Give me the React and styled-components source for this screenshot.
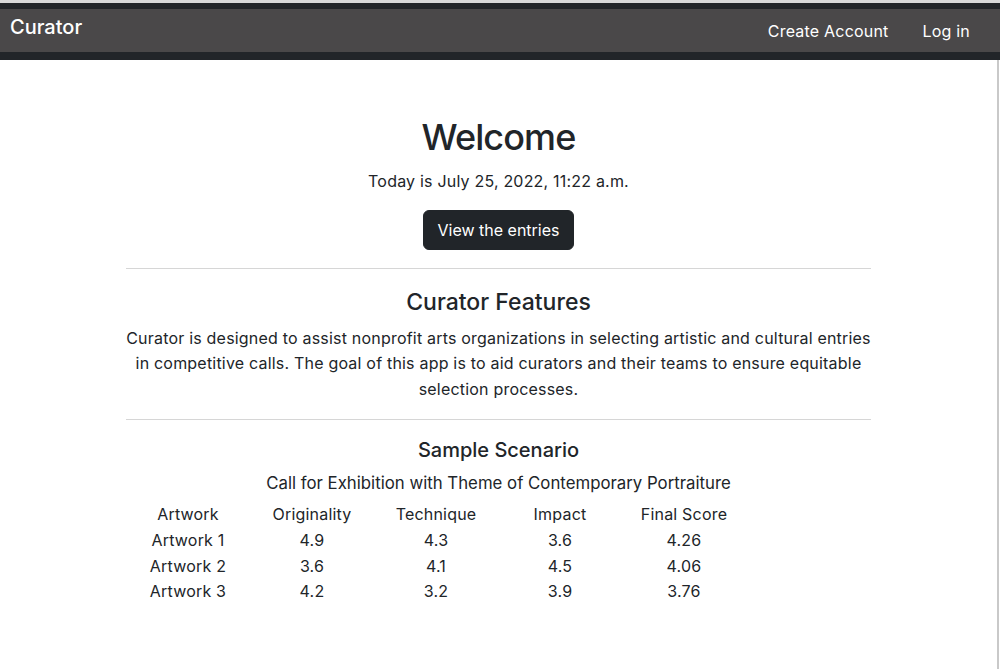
import React from "react";
import styled, { createGlobalStyle } from "styled-components";

const GlobalStyle = createGlobalStyle`
  body {
    margin: 0;
    background: #fff;
    font-family: Inter, "Noto Sans", sans-serif;
    color: #212529;
    font-size: 16px;
  }
`;

const NavBar = styled.nav`
  background: #222529;
  border-top: 3px solid #d9d9d9;
  padding: 6px 0 8px;
`;

const NavInner = styled.div`
  background: #4a4849;
  height: 43px;
  display: flex;
  align-items: center;
  justify-content: space-between;
  padding: 0 30px 0 10px;
`;

const Brand = styled.a`
  color: #fff;
  font-size: 20px;
  font-weight: 500;
  text-decoration: none;
  margin-top: -8px;
`;

const NavLinks = styled.div`
  display: flex;
  gap: 34px;
  margin-top: 1px;
`;

const NavLink = styled.a`
  color: #fff;
  font-size: 16px;
  letter-spacing: 0.2px;
  text-decoration: none;
`;

const Page = styled.div`
  margin-right: 1px;
  border-right: 2px solid #c9c9c9;
  min-height: 609px;
`;

const Main = styled.main`
  width: 745px;
  margin: 0 auto;
  padding-top: 53px;
  text-align: center;
  letter-spacing: 0.2px;
`;

const Title = styled.h1`
  font-size: 36px;
  font-weight: 500;
  letter-spacing: -0.9px;
  margin: 0;
  line-height: 48px;
`;

const DateLine = styled.p`
  margin: 8px 0 0;
  line-height: 24px;
`;

const Button = styled.button`
  margin-top: 17px;
  background: #212529;
  color: #fff;
  border: 1px solid #212529;
  border-radius: 6px;
  font-family: inherit;
  letter-spacing: 0;
  font-size: 16px;
  padding: 0 12px;
  height: 40px;
  width: 151px;
`;

const Rule = styled.hr`
  border: 0;
  border-top: 1px solid #d6d6d6;
  margin: ${(p) => p.$top}px 0 0;
`;

const SectionTitle = styled.h3`
  font-size: ${(p) => p.$size}px;
  font-weight: 500;
  letter-spacing: 0;
  margin: ${(p) => p.$top}px 0 0;
  line-height: 1.2;
`;

const Text = styled.p`
  margin: 9px 0 0;
  line-height: 25.6px;
`;

const Subtitle = styled.h6`
  font-size: 16.8px;
  font-weight: 400;
  letter-spacing: 0;
  margin: 9px 0 0;
  line-height: 24px;
`;

const ScoreTable = styled.table`
  width: 620px;
  border-collapse: collapse;
  margin-top: 7px;
  td,
  th {
    width: 124px;
    padding: 0;
    font-weight: 400;
    text-align: center;
    line-height: 25.6px;
  }
`;

const rows = [
  ["Artwork 1", "4.9", "4.3", "3.6", "4.26"],
  ["Artwork 2", "3.6", "4.1", "4.5", "4.06"],
  ["Artwork 3", "4.2", "3.2", "3.9", "3.76"],
];

export default function App() {
  return (
    <>
      <GlobalStyle />
      <NavBar>
        <NavInner>
          <Brand href="#">Curator</Brand>
          <NavLinks>
            <NavLink href="#">Create Account</NavLink>
            <NavLink href="#">Log in</NavLink>
          </NavLinks>
        </NavInner>
      </NavBar>
      <Page>
        <Main>
          <Title>Welcome</Title>
          <DateLine>Today is July 25, 2022, 11:22 a.m.</DateLine>
          <Button>View the entries</Button>
          <Rule $top={18} />
          <SectionTitle $size={23} $top={20}>Curator Features</SectionTitle>
          <Text>
            Curator is designed to assist nonprofit arts organizations in selecting artistic and
            cultural entries in competitive calls. The goal of this app is to aid curators and their
            teams to ensure equitable selection processes.
          </Text>
          <Rule $top={17} />
          <SectionTitle $size={20} $top={18}>Sample Scenario</SectionTitle>
          <Subtitle>Call for Exhibition with Theme of Contemporary Portraiture</Subtitle>
          <ScoreTable>
            <thead>
              <tr>
                <th>Artwork</th>
                <th>Originality</th>
                <th>Technique</th>
                <th>Impact</th>
                <th>Final Score</th>
              </tr>
            </thead>
            <tbody>
              {rows.map((r) => (
                <tr key={r[0]}>
                  {r.map((c, i) => (
                    <td key={i}>{c}</td>
                  ))}
                </tr>
              ))}
            </tbody>
          </ScoreTable>
        </Main>
      </Page>
    </>
  );
}
